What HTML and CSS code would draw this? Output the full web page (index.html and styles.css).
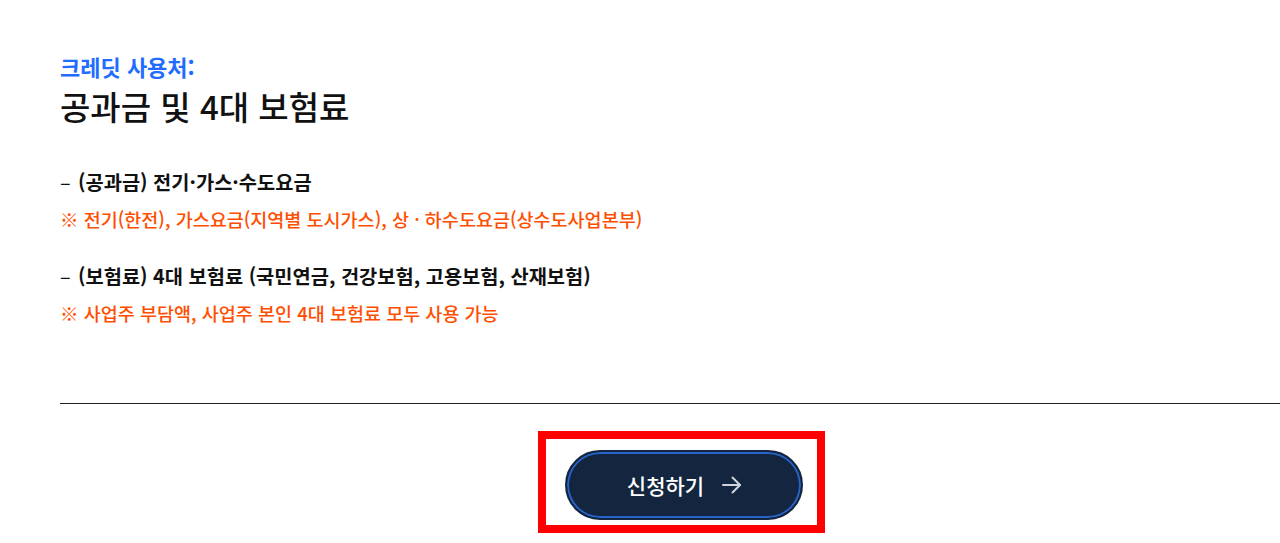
FILE: index.html
```html
<!DOCTYPE html>
<html lang="ko">
<head>
<meta charset="utf-8">
<title>크레딧 사용처</title>
<link rel="stylesheet" href="styles.css">
</head>
<body>
<main class="page">
  <section class="usage">
    <p class="eyebrow">크레딧 사용처:</p>
    <h1 class="title">공과금 및 4대 보험료</h1>
    <ul class="items">
      <li class="item">
        <p class="item-head"><span class="dash">–</span>(공과금) 전기·가스·수도요금</p>
        <p class="item-note">※ 전기(한전), 가스요금(지역별 도시가스), 상 · 하수도요금(상수도사업본부)</p>
      </li>
      <li class="item">
        <p class="item-head"><span class="dash">–</span>(보험료) 4대 보험료 (국민연금, 건강보험, 고용보험, 산재보험)</p>
        <p class="item-note">※ 사업주 부담액, 사업주 본인 4대 보험료 모두 사용 가능</p>
      </li>
    </ul>
  </section>
  <div class="action-row">
    <div class="highlight">
      <button class="apply-btn" type="button">
        <span>신청하기</span>
        <svg class="arrow" width="22" height="22" viewBox="0 0 22 22" fill="none" stroke="currentColor" stroke-width="2" stroke-linecap="round" stroke-linejoin="round"><path d="M2 11h17"/><path d="M11.5 3.5L19 11l-7.5 7.5"/></svg>
      </button>
    </div>
  </div>
</main>
</body>
</html>
```
FILE: styles.css
```css
* { box-sizing: border-box; }
html, body { margin: 0; padding: 0; background: #fff; }
body {
  font-family: "Noto Sans CJK KR", "Noto Sans", sans-serif;
  color: #111;
  width: 1280px;
  overflow: hidden;
}
.page { padding-left: 60px; }
.usage {
  padding-top: 51px;
  height: 404px;
  border-bottom: 1px solid #222;
}
.eyebrow {
  margin: 0;
  font-size: 22px;
  font-weight: 600;
  line-height: 30px;
  color: #1f6cff;
}
.title {
  margin: 3px 0 0;
  font-size: 33px;
  font-weight: 500;
  line-height: 44px;
}
.items {
  list-style: none;
  margin: 40px 0 0;
  padding: 0;
}
.item + .item { margin-top: 30px; }
.item-head {
  margin: 0;
  font-size: 19.8px;
  font-weight: 700;
  line-height: 28px;
}
.dash { display: inline-block; width: 18px; font-weight: 400; }
.item-note {
  margin: 10px 0 0;
  font-size: 18.5px;
  font-weight: 500;
  line-height: 26px;
  color: #ff4e00;
}
.action-row {
  display: flex;
  justify-content: center;
  padding-left: 23px;
  padding-top: 27px;
}
.highlight {
  border: 8px solid #ff0000;
  padding: 11px 14px 5px 19px;
}
.apply-btn {
  width: 238px;
  height: 70px;
  border-radius: 35px;
  background: #14263f;
  border: 2px solid #14263f;
  box-shadow: inset 0 0 0 2px #2763c8;
  color: #fff;
  font-family: inherit;
  font-size: 21px;
  font-weight: 500;
  display: flex;
  align-items: center;
  justify-content: center;
  gap: 17px;
  padding: 0 0 0 2px;
}
.arrow { color: #cfd3da; }
```
